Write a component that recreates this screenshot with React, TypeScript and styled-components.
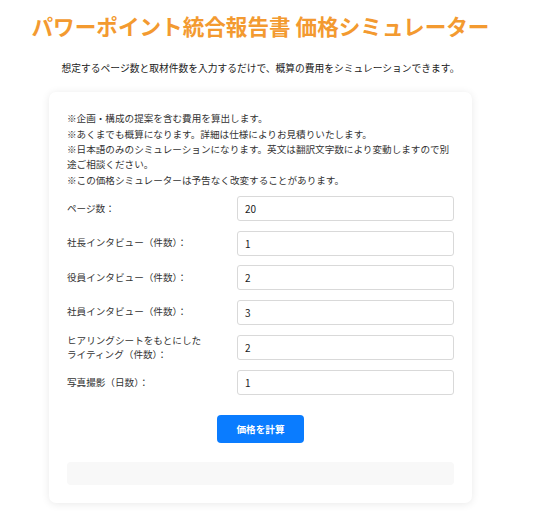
import React, { useState } from "react";
import styled, { createGlobalStyle } from "styled-components";

const GlobalStyle = createGlobalStyle`
  html, body {
    margin: 0;
    padding: 0;
    background: #ffffff;
  }
  body {
    font-family: "Noto Sans CJK JP", "Noto Sans", sans-serif;
    color: #333333;
  }
  * { box-sizing: border-box; }
`;

const Page = styled.div`
  width: 521px;
  display: flex;
  flex-direction: column;
  align-items: center;
  padding-top: 13px;
  padding-bottom: 8px;
`;

const Title = styled.h1`
  margin: 0;
  font-size: 21.6px;
  line-height: 26px;
  font-weight: 700;
  color: #f39a30;
  white-space: nowrap;
`;

const Lead = styled.p`
  margin: 22px 0 0;
  font-size: 9.75px;
  line-height: 15.6px;
  color: #222222;
`;

const Card = styled.section`
  margin-top: 15.5px;
  width: 423px;
  padding: 19px 18px 18.7px;
  background: #ffffff;
  border-radius: 7px;
  box-shadow: 0 1px 8px rgba(0, 0, 0, 0.09);
  display: flex;
  flex-direction: column;
`;

const Notes = styled.div`
  font-size: 9.6px;
  line-height: 15.4px;
  color: #333333;
  margin-bottom: 8px;
`;

const Form = styled.div`
  display: grid;
  grid-template-columns: 170px 1fr;
  row-gap: 9.5px;
  align-items: center;
`;

const Label = styled.label`
  font-size: 9.6px;
  line-height: 13.4px;
  color: #333333;
`;

const Input = styled.input`
  width: 100%;
  height: 25px;
  padding: 0 7px;
  border: 1px solid #d9d9d9;
  border-radius: 3px;
  font-family: "Noto Sans CJK JP", "Noto Sans", sans-serif;
  font-size: 10px;
  color: #222222;
  background: #ffffff;
  outline: none;
  -moz-appearance: textfield;
  &::-webkit-outer-spin-button,
  &::-webkit-inner-spin-button {
    -webkit-appearance: none;
    margin: 0;
  }
`;

const ButtonRow = styled.div`
  display: flex;
  justify-content: center;
  margin-top: 19.5px;
`;

const CalcButton = styled.button`
  width: 87px;
  height: 28px;
  border: none;
  border-radius: 4px;
  background: #0a7cff;
  color: #ffffff;
  font-family: "Noto Sans CJK JP", "Noto Sans", sans-serif;
  font-size: 9.6px;
  font-weight: 700;
  cursor: pointer;
`;

const Result = styled.div`
  margin-top: 18.6px;
  min-height: 23px;
  border-radius: 4px;
  background: #f8f8f8;
  font-size: 10px;
  line-height: 23px;
  padding: 0 8px;
  color: #333333;
`;

type Field = { key: string; label: React.ReactNode; value: number; price: number };

const initialFields: Field[] = [
  { key: "pages", label: "ページ数：", value: 20, price: 30000 },
  { key: "ceo", label: "社長インタビュー（件数）：", value: 1, price: 150000 },
  { key: "exec", label: "役員インタビュー（件数）：", value: 2, price: 100000 },
  { key: "staff", label: "社員インタビュー（件数）：", value: 3, price: 80000 },
  {
    key: "writing",
    label: (
      <>
        ヒアリングシートをもとにした
        <br />
        ライティング（件数）：
      </>
    ),
    value: 2,
    price: 50000,
  },
  { key: "photo", label: "写真撮影（日数）：", value: 1, price: 120000 },
];

export default function App() {
  const [fields, setFields] = useState<Field[]>(initialFields);
  const [result, setResult] = useState<string>("");

  const update = (key: string, v: string) => {
    setFields((fs) => fs.map((f) => (f.key === key ? { ...f, value: Number(v) || 0 } : f)));
  };

  const calc = () => {
    const total = fields.reduce((s, f) => s + f.value * f.price, 0);
    setResult(`概算費用：${total.toLocaleString("ja-JP")}円（税別）`);
  };

  return (
    <>
      <GlobalStyle />
      <Page>
        <Title>パワーポイント統合報告書 価格シミュレーター</Title>
        <Lead>想定するページ数と取材件数を入力するだけで、概算の費用をシミュレーションできます。</Lead>
        <Card>
          <Notes>
            ※企画・構成の提案を含む費用を算出します。
            <br />
            ※あくまでも概算になります。詳細は仕様によりお見積りいたします。
            <br />
            ※日本語のみのシミュレーションになります。英文は翻訳文字数により変動しますので別途ご相談ください。
            <br />
            ※この価格シミュレーターは予告なく改変することがあります。
          </Notes>
          <Form>
            {fields.map((f) => (
              <React.Fragment key={f.key}>
                <Label htmlFor={f.key}>{f.label}</Label>
                <Input
                  id={f.key}
                  type="number"
                  min={0}
                  value={f.value}
                  onChange={(e) => update(f.key, e.target.value)}
                />
              </React.Fragment>
            ))}
          </Form>
          <ButtonRow>
            <CalcButton type="button" onClick={calc}>
              価格を計算
            </CalcButton>
          </ButtonRow>
          <Result>{result}</Result>
        </Card>
      </Page>
    </>
  );
}
